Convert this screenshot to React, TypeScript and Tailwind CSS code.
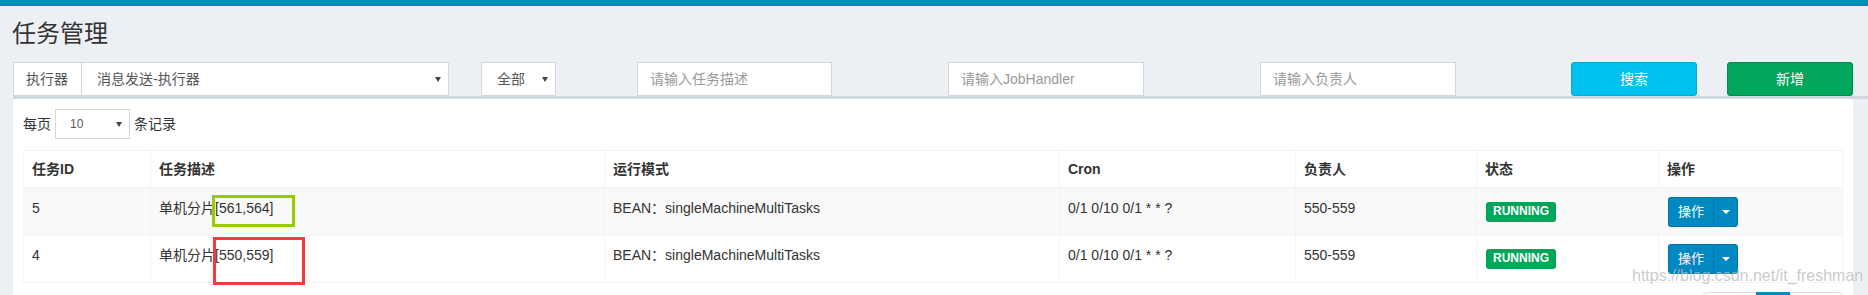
import React from "react";

function Caret() {
  return <span className="h-0 w-0 border-x-[3px] border-t-[5px] border-x-transparent border-t-[#444]" />;
}

const headers = ["任务ID", "任务描述", "运行模式", "Cron", "负责人", "状态", "操作"];
const widths = ["w-[128px]", "w-[454px]", "w-[455px]", "w-[236px]", "w-[181px]", "w-[182px]", "w-[184px]"];

const rows = [
  { id: "5", desc: "单机分片[561,564]", mode: "BEAN：singleMachineMultiTasks", cron: "0/1 0/10 0/1 * * ?", owner: "550-559" },
  { id: "4", desc: "单机分片[550,559]", mode: "BEAN：singleMachineMultiTasks", cron: "0/1 0/10 0/1 * * ?", owner: "550-559" },
];

export default function App() {
  return (
    <div className="relative h-[295px] w-[1868px] overflow-hidden bg-[#ecf0f5] font-['Liberation_Sans','Noto_Sans_CJK_SC',sans-serif] text-[14px] text-[#333]">
      <div className="h-[6px] bg-[#008bbd]" />
      <div className="pl-[12px] pt-[16px]">
        <h1 className="text-[24px] font-normal leading-[24px] text-[#333]">任务管理</h1>
      </div>

      {/* filter row */}
      <div className="mt-[16px] flex h-[34px] pl-[13px] text-[#555]">
        <div className="flex w-[436px]">
          <div className="flex w-[68px] items-center border-y border-l border-[#d2d6de] bg-white px-[12px]">执行器</div>
          <div className="flex flex-1 items-center justify-between border border-[#d2d6de] bg-white pl-[15px] pr-[7px]">
            <span>消息发送-执行器</span>
            <Caret />
          </div>
        </div>
        <div className="ml-[32px] flex w-[75px] items-center justify-between border border-[#d2d6de] bg-white pl-[15px] pr-[7px]">
          <span>全部</span>
          <Caret />
        </div>
        <input
          readOnly
          placeholder="请输入任务描述"
          className="ml-[81px] w-[195px] border border-[#d2d6de] bg-white px-[12px] text-[14px] outline-none placeholder:text-[#999]"
        />
        <input
          readOnly
          placeholder="请输入JobHandler"
          className="ml-[116px] w-[196px] border border-[#d2d6de] bg-white px-[12px] text-[14px] outline-none placeholder:text-[#999]"
        />
        <input
          readOnly
          placeholder="请输入负责人"
          className="ml-[116px] w-[196px] border border-[#d2d6de] bg-white px-[12px] text-[14px] outline-none placeholder:text-[#999]"
        />
        <button className="ml-[115px] flex w-[126px] items-center justify-center rounded-[3px] border border-[#00acd6] bg-[#00c0ef] text-white">
          搜索
        </button>
        <button className="ml-[30px] flex w-[126px] items-center justify-center rounded-[3px] border border-[#008d4c] bg-[#00a65a] text-white">
          新增
        </button>
      </div>

      {/* box */}
      <div className="ml-[13px] h-[3px] bg-[#d2d6de]" />
      <div className="ml-[13px] w-[1840px] bg-white px-[10px] pt-[10px] pb-[20px]">
        <div className="flex h-[30px] items-center">
          <span>每页</span>
          <div className="ml-[4px] flex h-[30px] w-[75px] items-center justify-between border border-[#d2d6de] pl-[14px] pr-[7px] text-[12px] text-[#555]">
            <span>10</span>
            <Caret />
          </div>
          <span className="ml-[4px]">条记录</span>
        </div>

        <table className="mt-[11px] w-[1820px] table-fixed border-separate border-spacing-0">
          <colgroup>
            {widths.map((w, i) => (
              <col key={i} className={w} />
            ))}
          </colgroup>
          <thead>
            <tr>
              {headers.map((h, i) => (
                <th
                  key={h}
                  className={`border-t border-r border-b-2 border-[#f4f4f4] px-[8px] py-[8px] text-left align-top font-bold leading-[20px] ${i === 0 ? "border-l" : ""}`}
                >
                  {h}
                </th>
              ))}
            </tr>
          </thead>
          <tbody>
            {rows.map((r, ri) => (
              <tr key={r.id} className={ri === 0 ? "bg-[#f9f9f9]" : "bg-white"}>
                <td className="border-r border-b border-l border-[#f4f4f4] px-[8px] pt-[9px] pb-[7px] align-top leading-[20px]">{r.id}</td>
                <td className="border-r border-b border-[#f4f4f4] px-[8px] pt-[9px] pb-[7px] align-top leading-[20px]">{r.desc}</td>
                <td className="border-r border-b border-[#f4f4f4] px-[8px] pt-[9px] pb-[7px] align-top leading-[20px]">{r.mode}</td>
                <td className="border-r border-b border-[#f4f4f4] px-[8px] pt-[9px] pb-[7px] align-top leading-[20px]">{r.cron}</td>
                <td className="border-r border-b border-[#f4f4f4] px-[8px] pt-[9px] pb-[7px] align-top leading-[20px]">{r.owner}</td>
                <td className="border-r border-b border-[#f4f4f4] px-[9px] pt-[11px] pb-[7px] align-top">
                  <span className="inline-block h-[20px] rounded-[3px] bg-[#00a65a] px-[7px] pb-[2px] text-[12px] font-bold leading-[18px] text-white">
                    RUNNING
                  </span>
                </td>
                <td className="border-r border-b border-[#f4f4f4] px-[9px] py-[8px] align-top">
                  <div className="flex h-[30px] w-[70px] text-[13px] text-white">
                    <div className="flex w-[45px] items-center justify-center rounded-l-[3px] border border-r-0 border-[#0077a8] bg-[#0089c0]">操作</div>
                    <div className="flex w-[25px] items-center justify-center rounded-r-[3px] border border-[#0077a8] bg-[#0089c0]">
                      <span className="h-0 w-0 border-x-[4px] border-t-[4px] border-x-transparent border-t-white" />
                    </div>
                  </div>
                </td>
              </tr>
            ))}
          </tbody>
        </table>

        {/* pagination (only its top edge is in view) */}
        <div className="mt-[9px] flex justify-end pr-[1px]">
          <div className="h-[34px] w-[53px] rounded-l-[4px] border border-[#ddd]" />
          <div className="h-[34px] w-[34px] border border-[#0089c0] bg-[#0089c0]" />
          <div className="h-[34px] w-[52px] rounded-r-[4px] border border-[#ddd]" />
        </div>
      </div>

      {/* annotation boxes */}
      <div className="absolute left-[212px] top-[195px] h-[32px] w-[83px] border-[3px] border-[#99cc00]" />
      <div className="absolute left-[213px] top-[237px] h-[48px] w-[92px] border-[3px] border-[#f03c3c]" />

      {/* watermark */}
      <div className="absolute left-[1632px] top-[268px] whitespace-nowrap text-[16px] leading-[16px] text-[#bdbdbd]/80">
        https://blog.csdn.net/it_freshman
      </div>
    </div>
  );
}
